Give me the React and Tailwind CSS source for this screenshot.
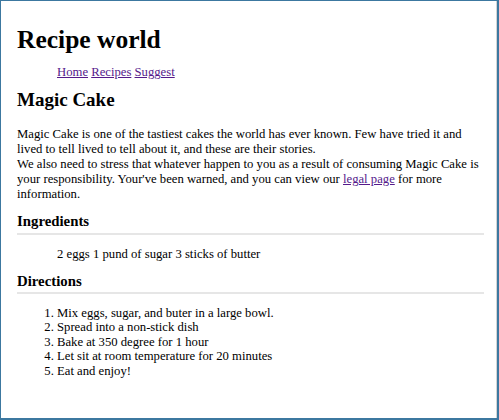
const LINK = "text-[#551a8b] underline";

const directions = [
  "Mix eggs, sugar, and buter in a large bowl.",
  "Spread into a non-stick dish",
  "Bake at 350 degree for 1 hour",
  "Let sit at room temperature for 20 minutes",
  "Eat and enjoy!",
];

export default function App() {
  return (
    <div className="w-[499px] h-[420px] bg-white border-t border-l border-r-2 border-b-2 border-[#3c78a0] overflow-hidden">
      <div className="h-full border-r border-[#d4d4d4] pl-4 pr-[12px] pt-[24px] text-black font-['Liberation_Serif','Times_New_Roman',serif]">
        <h1 className="text-[25.5px] leading-[30px] font-bold">Recipe world</h1>

        <nav className="mt-[10px] pl-10 text-[12.7px] leading-[15px]">
          <a href="#" className={LINK}>Home</a>{" "}
          <a href="#" className={LINK}>Recipes</a>{" "}
          <a href="#" className={LINK}>Suggest</a>
        </nav>

        <h2 className="mt-[9px] text-[19px] leading-[22px] font-bold">Magic Cake</h2>

        <p className="mt-[16px] text-[12.7px] leading-[15px]">
          Magic Cake is one of the tastiest cakes the world has ever known. Few have tried it and
          lived to tell lived to tell about it, and these are their stories.
          <br />
          We also need to stress that whatever happen to you as a result of consuming Magic Cake is
          your responsibility. Your've been warned, and you can view our{" "}
          <a href="#" className={LINK}>legal page</a> for more information.
        </p>

        <h3 className="mt-[11px] text-[14.8px] leading-[17px] font-bold pb-[3px] border-b-2 border-[#e6e6e6]">
          Ingredients
        </h3>
        <p className="mt-[12px] pl-10 text-[12.7px] leading-[15px]">
          2 eggs 1 pund of sugar 3 sticks of butter
        </p>

        <h3 className="mt-[11px] text-[14.8px] leading-[17px] font-bold pb-[2px] border-b-2 border-[#e6e6e6]">
          Directions
        </h3>
        <ol className="mt-[12px] pl-10 list-decimal text-[12.7px] leading-[14.4px]">
          {directions.map((d) => (
            <li key={d}>{d}</li>
          ))}
        </ol>
      </div>
    </div>
  );
}
